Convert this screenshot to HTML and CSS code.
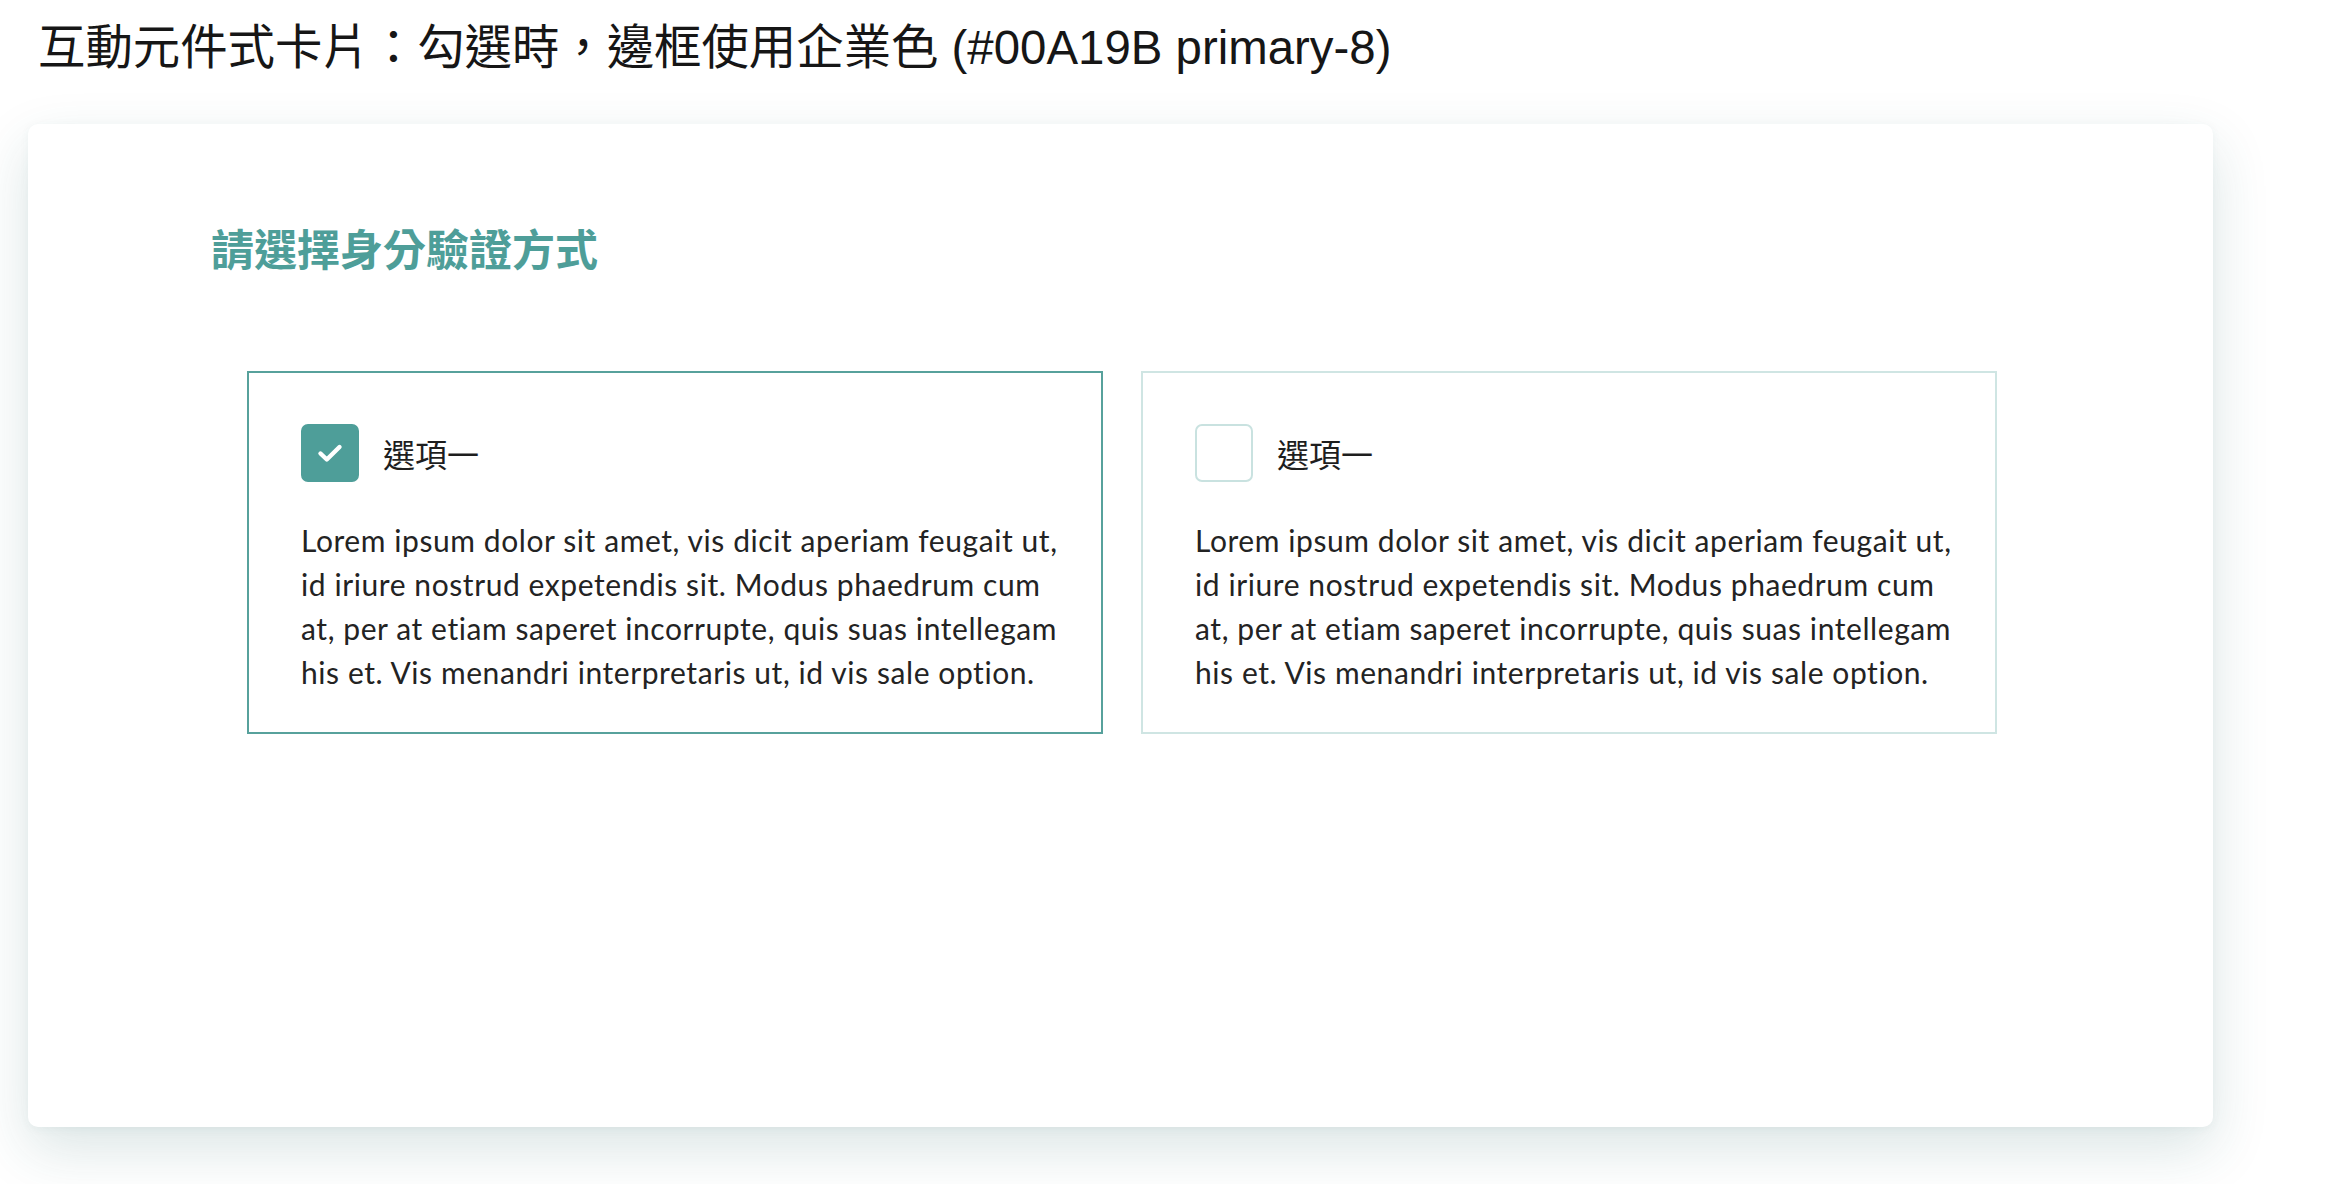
FILE: index.html
```html
<!DOCTYPE html>
<html lang="zh-Hant">
<head>
<meta charset="utf-8">
<title>互動元件式卡片</title>
<link rel="stylesheet" href="styles.css">
</head>
<body>
<h1 class="page-title">互動元件式卡片：勾選時，邊框使用企業色 (#00A19B primary-8)</h1>
<section class="panel">
  <h2 class="panel-title">請選擇身分驗證方式</h2>
  <div class="options">
    <div class="option option--checked">
      <div class="option-head">
        <span class="checkbox checkbox--checked">
          <svg class="check-icon" viewBox="0 0 28 28" width="28" height="28" aria-hidden="true">
            <polyline points="4.5,14.5 10.8,20.5 23.5,8" fill="none" stroke="#fff" stroke-width="4.4" stroke-linecap="round" stroke-linejoin="round"/>
          </svg>
        </span>
        <span class="option-label">選項一</span>
      </div>
      <p class="option-text">Lorem ipsum dolor sit amet, vis dicit aperiam feugait ut,<br>id iriure nostrud expetendis sit. Modus phaedrum cum<br>at, per at etiam saperet incorrupte, quis suas intellegam<br>his et. Vis menandri interpretaris ut, id vis sale option.</p>
    </div>
    <div class="option">
      <div class="option-head">
        <span class="checkbox"></span>
        <span class="option-label">選項一</span>
      </div>
      <p class="option-text">Lorem ipsum dolor sit amet, vis dicit aperiam feugait ut,<br>id iriure nostrud expetendis sit. Modus phaedrum cum<br>at, per at etiam saperet incorrupte, quis suas intellegam<br>his et. Vis menandri interpretaris ut, id vis sale option.</p>
    </div>
  </div>
</section>
</body>
</html>
```
FILE: styles.css
```css
html, body {
  margin: 0;
  background: #ffffff;
}

body {
  font-family: "Liberation Sans", "Noto Sans CJK TC", sans-serif;
  color: #1b1b1b;
  min-height: 1184px;
}

.page-title {
  margin: 0;
  padding: 20px 0 0 38px;
  font-size: 47.4px;
  line-height: 56px;
  font-weight: 400;
  color: #161616;
}

.panel {
  box-sizing: border-box;
  width: 2185px;
  height: 1003px;
  margin: 48px 0 0 28px;
  padding: 101px 0 0 183px;
  background: #ffffff;
  border-radius: 10px;
  box-shadow: 0 22px 56px rgba(30, 95, 95, 0.16), 0 2px 10px rgba(30, 95, 95, 0.05);
}

.panel-title {
  margin: 0;
  font-family: "Noto Sans CJK TC", sans-serif;
  font-size: 43px;
  line-height: 44px;
  font-weight: 700;
  color: #4e9e99;
}

.options {
  display: flex;
  gap: 38px;
  margin: 102px 0 0 36px;
}

.option {
  box-sizing: border-box;
  width: 856px;
  height: 363px;
  padding: 51px 40px 0 52px;
  border: 2px solid #cfe5e3;
  background: #ffffff;
}

.option--checked {
  border-color: #57a19c;
}

.option-head {
  display: flex;
  align-items: center;
  gap: 24px;
}

.checkbox {
  box-sizing: border-box;
  width: 58px;
  height: 58px;
  border: 2px solid #c9e2e0;
  border-radius: 7px;
  display: flex;
  align-items: center;
  justify-content: center;
  background: #ffffff;
}

.checkbox--checked {
  background: #4e9e99;
  border-color: #4e9e99;
}

.check-icon {
  display: block;
}

.option-label {
  font-family: "Noto Sans CJK TC", sans-serif;
  font-size: 32px;
  line-height: 40px;
  color: #1e1e1e;
}

.option-text {
  margin: 36px 0 0 0;
  font-family: Lato, sans-serif;
  font-size: 30px;
  line-height: 44px;
  letter-spacing: 0.58px;
  color: #232323;
  white-space: nowrap;
}
```
